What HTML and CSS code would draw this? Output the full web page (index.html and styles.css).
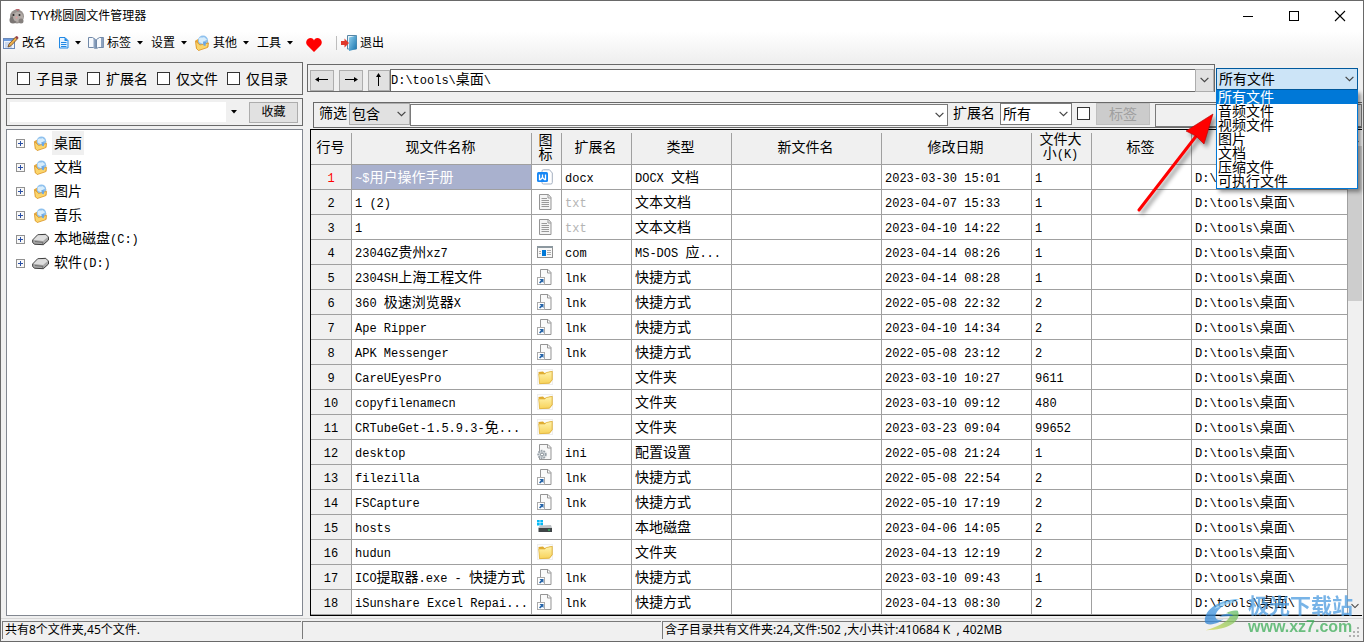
FILE: index.html
```html
<!DOCTYPE html>
<html lang="zh-CN">
<head>
<meta charset="utf-8">
<title>TYY桃圆圆文件管理器</title>
<link rel="stylesheet" href="styles.css">
</head>
<body>
<svg class="defs" aria-hidden="true">
  <defs>
    <linearGradient id="g-folder" x1="0" y1="0" x2="0" y2="1"><stop offset="0" stop-color="#fff3ad"/><stop offset="1" stop-color="#f7d25a"/></linearGradient>
    <linearGradient id="g-door" x1="0" y1="0" x2="1" y2="1"><stop offset="0" stop-color="#8fd0ee"/><stop offset="1" stop-color="#1673ad"/></linearGradient>
    <linearGradient id="g-swoosh" x1="1" y1="0" x2="0" y2="1"><stop offset="0" stop-color="#58b0ee"/><stop offset="1" stop-color="#2c7fd0"/></linearGradient>
    <linearGradient id="g-leaf" x1="1" y1="0" x2="0" y2="1"><stop offset="0" stop-color="#57b96a"/><stop offset="1" stop-color="#d9dc4e"/></linearGradient>
  </defs>
  <symbol id="chev" viewBox="0 0 9 6"><path d="M.6.8 4.5 4.7 8.4.8" fill="none" stroke="#444" stroke-width="1.2"/></symbol>
  <symbol id="caret" viewBox="0 0 6 4"><path d="M0 0h6L3 3.5z" fill="#000"/></symbol>
  <symbol id="plus" viewBox="0 0 9 9"><rect x=".5" y=".5" width="8" height="8" fill="#f8f8f8" stroke="#919191"/><path d="M2 4.5h5M4.5 2v5" stroke="#2a4fa5"/></symbol>
  <symbol id="globe-folder" viewBox="0 0 16 16"><path d="M1.500 5.500 4 4l3 3 7-2 .5 7-10 3.500-2.500-2z" fill="#e8a93a"/><circle cx="9" cy="5.500" r="5" fill="#8fc1ee"/><path d="M5 3.500c2-2 3 0 5-1.500l3 2.500-3 2-1 2.500-4-2z" fill="#d8edfb"/><path d="M1.500 6 6 10l8.500-2-1 4.500L4.500 15.500l-2-2z" fill="#fbd56b" stroke="#d9962d" stroke-width=".8"/><path d="m9 6.500 3 .5-.5 4-2-.5z" fill="#6ba7e4"/></symbol>
  <symbol id="drive" viewBox="0 0 18 14"><path d="M.7 7.500 6 2l8.500-.5 3 3v3L12 12.500l-9.500-.5-1.800-2z" fill="#aaa" stroke="#333"/><path d="M1.500 7.200 6.300 2.600l8-.4 2.400 2.200-5 4.300z" fill="#dedede"/><path d="M3 9.200 11.500 10v2" stroke="#666" fill="none"/></symbol>
  <symbol id="docx" viewBox="0 0 16 16"><path d="M6.500.8h6L15.300 4v9.500a1.500 1.500 0 0 1-1.500 1.500H6.500A1.500 1.500 0 0 1 5 13.500v-11A1.500 1.500 0 0 1 6.500.8z" fill="#fff" stroke="#a4afc0"/><rect y="3" width="11" height="10" rx="1.500" fill="#1787f5"/><path d="M2.500 5.500v5h1l2-2 2 2h1v-5M5.500 5.500v3" fill="none" stroke="#fff" stroke-width="1.300"/></symbol>
  <symbol id="txt" viewBox="0 0 16 16"><path d="M2.500.5h9l2.500 3v12H2.500z" fill="#f4f4f4" stroke="#959595"/><path d="M11 .8V4h3M4.500 4.500H10M4.500 6.500h7.500M4.500 8.500h7.500M4.500 10.500h7.500M4.500 12.500h7.500" fill="none" stroke="#999"/></symbol>
  <symbol id="com" viewBox="0 0 16 16"><rect x=".5" y="2.500" width="15" height="11" fill="#f8f8f8" stroke="#929292"/><path d="M0 2h16v2H0z" fill="#8c989f"/><path d="M5 6h4v6H5z" fill="#0078d7"/><path d="M2 7.500h2M2 9.500h2M10 6.500h4M10 8.500h4M10 10.500h4" stroke="#aaa"/></symbol>
  <symbol id="lnk" viewBox="0 0 16 16"><path d="M3.500.5H11l3 3v12H3.500z" fill="#fafafa" stroke="#959595"/><path d="M10.500.8V4H14" fill="none" stroke="#999"/><rect x=".5" y="8.500" width="7" height="7" fill="#fff" stroke="#aaa"/><path d="M2.500 10h4v4L5.200 12.700 3.200 14.600 2 13.400l1.900-2z" fill="#2564a8"/></symbol>
  <symbol id="dir" viewBox="0 0 16 16"><rect x=".5" y=".5" width="15" height="15" fill="#fcfcfc" stroke="#eee"/><path d="M1.500 3 6 2.500 7.500 4 13 2.500l2.500-.5V11l-3 3.500-10 .5z" fill="#dfaa2d"/><path d="M1.800 5h6L9.500 3.500 15 2.500v8.300L12.500 14l-10 .7z" fill="url(#g-folder)" stroke="#e0b542" stroke-width=".7"/></symbol>
  <symbol id="ini" viewBox="0 0 16 16"><path d="M2.500.5H11l3 3v12H2.500z" fill="#f7f7f7" stroke="#959595"/><path d="M10.500.8V4H14" fill="none" stroke="#999"/><circle cx="5" cy="10.500" r="3.800" fill="#d1d6da" stroke="#98a1a8" stroke-width="1.800" stroke-dasharray="1.700 1"/><circle cx="5" cy="10.500" r="1.500" fill="#fff" stroke="#808990"/></symbol>
  <symbol id="disk" viewBox="0 0 16 16"><path d="M0 1h2.700v2.500H0zM3.300 1H6v2.500H3.300zM0 4h2.700v2.500H0zM3.300 4H6v2.500H3.300z" fill="#05b9f5"/><path d="m3 6.500 11-.5 1 3H1z" fill="#bfc3c6"/><path d="M1.500 9H15v4H1.500z" fill="#3f4447"/><path d="M11 11h2" stroke="#37e46b"/></symbol>
</svg>

<div class="window">
  <header class="titlebar">
    <svg class="ic16" viewBox="0 0 16 16"><circle cx="8" cy="8.500" r="7" fill="#98928f"/><circle cx="4" cy="12" r="3.500" fill="#7b7674"/><circle cx="9" cy="9" r="5" fill="#b3aca8"/><circle cx="12" cy="13" r="2.500" fill="#85807d"/><path d="M6 1h5l-2 2z" fill="#b8646c"/><circle cx="4.500" cy="7" r="1" fill="#292626"/><circle cx="10.500" cy="7" r="1" fill="#292626"/><circle cx="7.500" cy="9.500" r="1" fill="#e49a9d"/></svg>
    <h1 class="title">TYY桃圆圆文件管理器</h1>
    <button class="winbtn" aria-label="最小化"><svg viewBox="0 0 10 10"><path d="M0 5.500h10" stroke="#000"/></svg></button>
    <button class="winbtn" aria-label="最大化"><svg viewBox="0 0 10 10"><rect x=".5" y=".5" width="9" height="9" fill="none" stroke="#000"/></svg></button>
    <button class="winbtn" aria-label="关闭"><svg viewBox="0 0 10 10"><path d="m0 0 10 10M10 0 0 10" stroke="#000" stroke-width="1.100"/></svg></button>
  </header>

  <nav class="toolbar">
    <button class="tool"><svg class="ic16" viewBox="0 0 16 16"><rect x=".5" y="3.500" width="11" height="10" fill="#eef4fc" stroke="#6c89b8"/><path d="M1 4h10v2H1z" fill="#6b9be0"/><path d="M2 8h5M2 10h4M2 12h7" stroke="#a9bedf"/><path d="m5 12 1-3 7-7.500 2 1.800-7 7.500z" fill="#edb04a" stroke="#674225" stroke-width=".8"/><path d="m12 2.500 2-1.500 1.500 1.600L14 4.300z" fill="#99404b"/></svg>改名</button>
    <button class="tool" aria-label="文件"><svg class="ic16" viewBox="0 0 16 16"><path d="M6.500 2.500H12l3 3V13H6.500z" fill="#e8f4ff" stroke="#2289e5"/><path d="M11.500 2v4H15z" fill="#2289e5"/><path d="M8 7.500h5.500M8 9.500h5.500M8 11.500h5.500" stroke="#2289e5"/></svg><svg class="caret"><use href="#caret"/></svg></button>
    <button class="tool"><svg class="ic16" viewBox="0 0 16 16"><path d="M.5 2.500h4l3 2v9l-2-1h-5zM15.500 2.500h-4l-3 2v9l2-1h5z" fill="#f6f9fd" stroke="#7189a8"/><path d="M5.500 3v10l2 1V4zM13 3v9h2.500V3z" fill="#8ca2bf"/></svg>标签<svg class="caret"><use href="#caret"/></svg></button>
    <button class="tool plain">设置<svg class="caret"><use href="#caret"/></svg></button>
    <button class="tool"><svg class="ic16"><use href="#globe-folder"/></svg>其他<svg class="caret"><use href="#caret"/></svg></button>
    <button class="tool plain">工具<svg class="caret"><use href="#caret"/></svg></button>
    <button class="tool heart" aria-label="收藏"><svg viewBox="0 0 16 14"><path d="M8 14 1 7C-1 4 1 0 4.500 0 6.500 0 7.500 1.200 8 2.500 8.500 1.200 9.500 0 11.500 0 15 0 17 4 15 7z" fill="#f00"/></svg></button>
    <span class="sep"></span>
    <button class="tool exit"><svg class="ic16" viewBox="0 0 16 16"><path d="M6.500.5h9V14h-9z" fill="#e8f3fa" stroke="#5686a5"/><path d="M8 2.500 15.500.500V14L8 16z" fill="url(#g-door)"/><path d="M0 6h3.500V3.500L8 8l-4.500 4.500V10H0z" fill="#df382b"/></svg>退出</button>
  </nav>

  <main class="main">
    <aside class="side">
      <div class="box checks">
        <label class="check"><input type="checkbox">子目录</label>
        <label class="check"><input type="checkbox">扩展名</label>
        <label class="check"><input type="checkbox">仅文件</label>
        <label class="check"><input type="checkbox">仅目录</label>
      </div>
      <div class="box fav">
        <input class="fav-input" type="text" aria-label="收藏目录">
        <button class="fav-drop" aria-label="展开"><svg class="caret"><use href="#caret"/></svg></button>
        <button class="btn fav-btn">收藏</button>
      </div>
      <ul class="tree">
        <li><svg class="plus"><use href="#plus"/></svg><svg class="node"><use href="#globe-folder"/></svg><span class="name current">桌面</span></li>
        <li><svg class="plus"><use href="#plus"/></svg><svg class="node"><use href="#globe-folder"/></svg><span class="name">文档</span></li>
        <li><svg class="plus"><use href="#plus"/></svg><svg class="node"><use href="#globe-folder"/></svg><span class="name">图片</span></li>
        <li><svg class="plus"><use href="#plus"/></svg><svg class="node"><use href="#globe-folder"/></svg><span class="name">音乐</span></li>
        <li><svg class="plus"><use href="#plus"/></svg><svg class="node"><use href="#drive"/></svg><span class="name">本地磁盘<span class="lat">(C:)</span></span></li>
        <li><svg class="plus"><use href="#plus"/></svg><svg class="node"><use href="#drive"/></svg><span class="name">软件<span class="lat">(D:)</span></span></li>
      </ul>
    </aside>

    <section class="content">
      <div class="pathrow">
        <div class="pathbox">
          <button class="btn nav" aria-label="后退"><svg viewBox="0 0 14 14"><path d="M1 6.500h12" stroke="#000"/><path d="m0 6.500 4-2.500v5z"/></svg></button>
          <button class="btn nav" aria-label="前进"><svg viewBox="0 0 14 14"><path d="M1 6.500h12" stroke="#000"/><path d="m14 6.500-4-2.500v5z"/></svg></button>
          <button class="btn nav up" aria-label="上一级"><svg viewBox="0 0 14 14"><path d="M6.500 1v12" stroke="#000"/><path d="m6.500 0-2.500 4h5z"/></svg></button>
          <div class="path" role="textbox" contenteditable="true" aria-label="路径">D:\tools\<span class="zh">桌面</span>\</div>
          <button class="btn path-drop" aria-label="展开路径"><svg class="chev"><use href="#chev"/></svg></button>
        </div>
        <div class="combo type">
          <select aria-label="文件类型"><option>所有文件</option><option>音频文件</option><option>视频文件</option><option>图片</option><option>文档</option><option>压缩文件</option><option>可执行文件</option></select>
          <svg class="chev"><use href="#chev"/></svg>
          <ul class="menu" role="listbox">
            <li class="on" role="option">所有文件</li>
            <li role="option">音频文件</li>
            <li role="option">视频文件</li>
            <li role="option">图片</li>
            <li role="option">文档</li>
            <li role="option">压缩文件</li>
            <li role="option">可执行文件</li>
          </ul>
        </div>
      </div>

      <div class="filter">
        <label for="mode">筛选</label>
        <div class="combo mode"><select id="mode"><option>包含</option></select><svg class="chev"><use href="#chev"/></svg></div>
        <div class="combo word"><input type="text" aria-label="筛选内容"><svg class="chev"><use href="#chev"/></svg></div>
        <label class="ext-label" for="ext">扩展名</label>
        <div class="combo ext"><select id="ext"><option>所有</option></select><svg class="chev"><use href="#chev"/></svg></div>
        <input class="tagcheck" type="checkbox" aria-label="按标签筛选">
        <button class="btn tagbtn" disabled>标签</button>
        <input class="tagtext" type="text" aria-label="标签内容">
      </div>

      <div class="gridbox">
        <table class="grid">
          <colgroup><col class="c-no"><col class="c-name"><col class="c-icon"><col class="c-ext"><col class="c-type"><col class="c-new"><col class="c-date"><col class="c-size"><col class="c-tag"><col></colgroup>
          <thead><tr><th>行号</th><th>现文件名称</th><th>图标</th><th>扩展名</th><th>类型</th><th>新文件名</th><th>修改日期</th><th>文件大小<span class="lat">(K)</span></th><th>标签</th><th>路径</th></tr></thead>
          <tbody>
            <tr class="first"><th>1</th><td class="sel">~$<span class="zh">用户操作手册</span></td><td><svg class="ic16"><use href="#docx"/></svg></td><td>docx</td><td>DOCX <span class="zh">文档</span></td><td></td><td>2023-03-30 15:01</td><td>1</td><td></td><td>D:\tools\<span class="zh">桌面</span>\</td></tr>
            <tr><th>2</th><td>1 (2)</td><td><svg class="ic16"><use href="#txt"/></svg></td><td class="dim">txt</td><td><span class="zh">文本文档</span></td><td></td><td>2023-04-07 15:33</td><td>1</td><td></td><td>D:\tools\<span class="zh">桌面</span>\</td></tr>
            <tr><th>3</th><td>1</td><td><svg class="ic16"><use href="#txt"/></svg></td><td class="dim">txt</td><td><span class="zh">文本文档</span></td><td></td><td>2023-04-10 14:22</td><td>1</td><td></td><td>D:\tools\<span class="zh">桌面</span>\</td></tr>
            <tr><th>4</th><td>2304GZ<span class="zh">贵州</span>xz7</td><td><svg class="ic16"><use href="#com"/></svg></td><td>com</td><td>MS-DOS <span class="zh">应</span>...</td><td></td><td>2023-04-14 08:26</td><td>1</td><td></td><td>D:\tools\<span class="zh">桌面</span>\</td></tr>
            <tr><th>5</th><td>2304SH<span class="zh">上海工程文件</span></td><td><svg class="ic16"><use href="#lnk"/></svg></td><td>lnk</td><td><span class="zh">快捷方式</span></td><td></td><td>2023-04-14 08:28</td><td>1</td><td></td><td>D:\tools\<span class="zh">桌面</span>\</td></tr>
            <tr><th>6</th><td>360 <span class="zh">极速浏览器</span>X</td><td><svg class="ic16"><use href="#lnk"/></svg></td><td>lnk</td><td><span class="zh">快捷方式</span></td><td></td><td>2022-05-08 22:32</td><td>2</td><td></td><td>D:\tools\<span class="zh">桌面</span>\</td></tr>
            <tr><th>7</th><td>Ape Ripper</td><td><svg class="ic16"><use href="#lnk"/></svg></td><td>lnk</td><td><span class="zh">快捷方式</span></td><td></td><td>2023-04-10 14:34</td><td>2</td><td></td><td>D:\tools\<span class="zh">桌面</span>\</td></tr>
            <tr><th>8</th><td>APK Messenger</td><td><svg class="ic16"><use href="#lnk"/></svg></td><td>lnk</td><td><span class="zh">快捷方式</span></td><td></td><td>2022-05-08 23:12</td><td>2</td><td></td><td>D:\tools\<span class="zh">桌面</span>\</td></tr>
            <tr><th>9</th><td>CareUEyesPro</td><td><svg class="ic16"><use href="#dir"/></svg></td><td></td><td><span class="zh">文件夹</span></td><td></td><td>2023-03-10 10:27</td><td>9611</td><td></td><td>D:\tools\<span class="zh">桌面</span>\</td></tr>
            <tr><th>10</th><td>copyfilenamecn</td><td><svg class="ic16"><use href="#dir"/></svg></td><td></td><td><span class="zh">文件夹</span></td><td></td><td>2023-03-10 09:12</td><td>480</td><td></td><td>D:\tools\<span class="zh">桌面</span>\</td></tr>
            <tr><th>11</th><td>CRTubeGet-1.5.9.3-<span class="zh">免</span>...</td><td><svg class="ic16"><use href="#dir"/></svg></td><td></td><td><span class="zh">文件夹</span></td><td></td><td>2023-03-23 09:04</td><td>99652</td><td></td><td>D:\tools\<span class="zh">桌面</span>\</td></tr>
            <tr><th>12</th><td>desktop</td><td><svg class="ic16"><use href="#ini"/></svg></td><td>ini</td><td><span class="zh">配置设置</span></td><td></td><td>2022-05-08 21:24</td><td>1</td><td></td><td>D:\tools\<span class="zh">桌面</span>\</td></tr>
            <tr><th>13</th><td>filezilla</td><td><svg class="ic16"><use href="#lnk"/></svg></td><td>lnk</td><td><span class="zh">快捷方式</span></td><td></td><td>2022-05-08 22:54</td><td>2</td><td></td><td>D:\tools\<span class="zh">桌面</span>\</td></tr>
            <tr><th>14</th><td>FSCapture</td><td><svg class="ic16"><use href="#lnk"/></svg></td><td>lnk</td><td><span class="zh">快捷方式</span></td><td></td><td>2022-05-10 17:19</td><td>2</td><td></td><td>D:\tools\<span class="zh">桌面</span>\</td></tr>
            <tr><th>15</th><td>hosts</td><td><svg class="ic16"><use href="#disk"/></svg></td><td></td><td><span class="zh">本地磁盘</span></td><td></td><td>2023-04-06 14:05</td><td>2</td><td></td><td>D:\tools\<span class="zh">桌面</span>\</td></tr>
            <tr><th>16</th><td>hudun</td><td><svg class="ic16"><use href="#dir"/></svg></td><td></td><td><span class="zh">文件夹</span></td><td></td><td>2023-04-13 12:19</td><td>2</td><td></td><td>D:\tools\<span class="zh">桌面</span>\</td></tr>
            <tr><th>17</th><td>ICO<span class="zh">提取器</span>.exe - <span class="zh">快捷方式</span></td><td><svg class="ic16"><use href="#lnk"/></svg></td><td>lnk</td><td><span class="zh">快捷方式</span></td><td></td><td>2023-03-10 09:43</td><td>1</td><td></td><td>D:\tools\<span class="zh">桌面</span>\</td></tr>
            <tr><th>18</th><td>iSunshare Excel Repai...</td><td><svg class="ic16"><use href="#lnk"/></svg></td><td>lnk</td><td><span class="zh">快捷方式</span></td><td></td><td>2023-04-13 08:30</td><td>2</td><td></td><td>D:\tools\<span class="zh">桌面</span>\</td></tr>
          </tbody>
        </table>
        <div class="scroll"><svg class="chev flip"><use href="#chev"/></svg><div class="thumb"></div><svg class="chev"><use href="#chev"/></svg></div>
      </div>
    </section>
  </main>

  <footer class="status">
    <div class="cell">共有8个文件夹,45个文件.</div>
    <div class="cell"></div>
    <div class="cell">含子目录共有文件夹:24,文件:502 ,大小共计:410684 K &nbsp;, 402MB</div>
    <svg class="grip" viewBox="0 0 12 12"><path d="M8 0h2v2H8zM4 4h2v2H4zM8 4h2v2H8zM0 8h2v2H0zM4 8h2v2H4zM8 8h2v2H8z" fill="#b0b0b0"/></svg>
  </footer>

  <svg class="pointer" viewBox="0 0 84 108" aria-hidden="true"><path d="M6 101 64 26" stroke="#f00" stroke-width="3" stroke-linecap="round"/><path d="M80 5 71 35 63 27 53 22z" fill="#f00" stroke="#b40000" stroke-width=".6"/></svg>

  <div class="mark">
    <svg viewBox="0 0 52 40"><path d="M1 28C0 12 20 1 42 1 28 5 17 11 14 19c-2 6 3 8 9 6l-6 4C10 32 2 32 1 28z" fill="url(#g-swoosh)"/><path d="M12 13C20 5 32 3 40 4 30 6 22 9 12 13z" fill="#8dcdf6"/><path d="M40 15c5 12-11 23-38 23 14-4 24-9 28-15 1-3-1-5-4-5 5-3 10-4 14-3z" fill="url(#g-leaf)"/><path d="M18 22c5-4 14-5 17-1-4 0-10 1-17 1z" fill="#3b8fd8"/></svg>
    <div class="mark-text"><span class="mark-name">极光下载站</span><span class="mark-url">www.xz7.com</span></div>
  </div>
</div>
</body>
</html>
```
FILE: styles.css
```css
* { box-sizing: border-box; }
body {
  margin: 0;
  background: #f0f0f0;
  color: #000;
  font: 14px/18px "Liberation Sans", "Noto Sans CJK SC", sans-serif;
}
button, input, select { font: inherit; color: inherit; margin: 0; border-radius: 0; }
button { padding: 0; border: 0; background: none; }
ul { margin: 0; padding: 0; list-style: none; }
svg { display: block; flex: none; overflow: visible; }
.defs { position: absolute; width: 0; height: 0; overflow: hidden; }
.lat { font-family: "Liberation Mono", monospace; font-size: 12px; }
.zh { font-family: "Noto Sans CJK SC", sans-serif; font-size: 14px; }
.ic16 { width: 16px; height: 16px; }
.caret { width: 6px; height: 4px; }
.chev { width: 9px; height: 6px; }

.window {
  position: relative;
  display: flex;
  flex-direction: column;
  min-height: 100vh;
  border: 1px solid #696969;
}

.titlebar { display: flex; align-items: center; height: 30px; padding-left: 8px; background: #fff; }
.title {
  flex: 1;
  margin: 0 0 0 5px;
  font: 12px/18px "Noto Sans", "Noto Sans CJK SC", sans-serif;
}
.winbtn { display: grid; place-items: center; width: 46px; height: 28px; }
.winbtn svg { width: 10px; height: 10px; }

.toolbar {
  display: flex;
  align-items: center;
  gap: 7px;
  height: 29px;
  padding: 0 2px 6px;
  background: linear-gradient(#fff, #f0f0f0);
}
.tool { display: flex; align-items: center; gap: 3px; font-size: 12px; white-space: nowrap; }
.tool .caret { margin-left: 3px; }
.plain { margin-left: 1px; }
.heart { margin: 4px 4px 0 6px; }
.heart svg { width: 16px; height: 14px; }
.sep { width: 1px; height: 14px; margin-left: 3px; background: #bdbdbd; }
.exit { margin-left: -3px; }

.main {
  flex: 1;
  display: grid;
  grid-template-columns: 297px minmax(0, 1fr);
  gap: 4px;
  padding: 2px 1px 2px 5px;
}
.box { border: 1px solid #696969; }
.btn { display: grid; place-items: center; border: 1px solid #adadad; background: #e1e1e1; }
input[type="checkbox"] {
  appearance: none;
  width: 13px;
  height: 13px;
  border: 1px solid #333;
  background: #fff;
}

.side { display: flex; flex-direction: column; gap: 3px; }
.checks { display: flex; align-items: center; gap: 9px; height: 33px; padding-left: 10px; }
.check { display: flex; align-items: center; gap: 6px; }
.fav { display: flex; align-items: center; height: 28px; padding: 3px 4px 3px 3px; }
.fav-input { flex: 1; min-width: 0; height: 100%; border: 0; }
.fav-drop { display: grid; place-items: center; width: 16px; height: 100%; }
.fav-btn { width: 49px; height: 21px; margin-left: 7px; font-size: 12px; }
.tree { flex: 1; padding-top: 1px; border: 1px solid #828790; background: #fff; }
.tree li { display: flex; align-items: center; height: 24px; padding-left: 9px; }
.plus { width: 9px; height: 9px; margin-right: 7px; }
.node { width: 17px; height: 15px; }
.name { margin-left: 3px; padding: 2px; line-height: 20px; }
.current { background: #f0f0f0; }

.content { display: flex; flex-direction: column; min-width: 0; }
.pathrow { display: flex; gap: 1px; padding: 2px 4px 0 0; }
.pathbox { flex: 1; display: flex; align-items: center; height: 28px; padding: 4px 0 0 2px; border: 1px solid #696969; min-width: 0; }
.nav { width: 24px; height: 21px; margin-right: 5px; }
.nav.up { width: 22px; margin-right: 0; }
.nav svg { width: 14px; height: 14px; }
.path {
  flex: 1;
  height: 23px;
  border: 1px solid #696969;
  border-right: 0;
  background: #fff;
  font: 12px/16px "Liberation Mono", "Noto Sans CJK SC", monospace;
}
.path-drop { width: 19px; height: 23px; }

.combo { position: relative; display: grid; align-items: center; }
.combo select, .combo input { grid-area: 1 / 1; width: 100%; height: 22px; appearance: none; border: 1px solid #7a7a7a; background: #fff; padding: 0 2px; outline: 0; }
.combo > .chev { grid-area: 1 / 1; justify-self: end; margin-right: 4px; pointer-events: none; }
.type { width: 142px; margin-top: 4px; height: 22px; }
.type select { border-color: #00599d; background: #cce4f7; }
.menu {
  position: absolute;
  z-index: 2;
  top: 22px;
  left: 0;
  right: 0;
  border: 1px solid #0078d7;
  border-top: 0;
  background: #fff;
  box-shadow: 3px 3px 4px rgba(0, 0, 0, .4);
}
.menu li { height: 14px; padding-left: 1px; line-height: 15px; }
.menu .on { background: #0078d7; color: #fff; }

.filter {
  display: flex;
  align-items: flex-start;
  height: 26px;
  margin: 10px 0 1px 6px;
  padding-left: 5px;
  border: 1px solid #696969;
  border-right: 0;
}
.filter label { line-height: 20px; }
.mode { width: 61px; margin-left: 2px; }
.mode select { border-color: #adadad; background: #e1e1e1; }
.word { flex: 1; margin-top: 1px; }
.ext-label { margin: 0 5px; }
.ext { width: 72px; }
.filter .tagcheck { margin: 4px 6px 0 5px; }
.tagbtn { width: 54px; height: 22px; margin-right: 5px; border-color: #bfbfbf; background: #ccc; color: #a0a0a0; }
.tagtext { width: 207px; height: 23px; margin-top: 1px; border: 1px solid #7a7a7a; background: #f0f0f0; }

.gridbox { display: flex; margin-left: 3px; border: 1px solid #000; border-right: 0; }
.grid {
  flex: 1;
  table-layout: fixed;
  width: 100%;
  border-spacing: 0;
  background: #fff;
  font: 12px/20px "Liberation Mono", "Noto Sans CJK SC", monospace;
}
.c-no { width: 41px; }
.c-name { width: 180px; }
.c-icon { width: 30px; }
.c-ext { width: 70px; }
.c-type { width: 100px; }
.c-new, .c-date { width: 150px; }
.c-size { width: 60px; }
.c-tag { width: 100px; }
.grid th {
  padding: 0;
  border: solid #a0a0a0;
  border-width: 0 1px 1px 0;
  background: #f0f0f0;
  font-weight: 400;
  text-align: center;
}
.grid thead th {
  height: 35px;
  padding: 0 8px 0 5px;
  border-right: 0;
  background: linear-gradient(#a0a0a0, #a0a0a0) right bottom / 1px 31px no-repeat #f0f0f0;
  font: 14px/14px "Liberation Sans", "Noto Sans CJK SC", sans-serif;
}
.grid thead th:first-child { padding: 0 2px 0 0; }
.grid td {
  height: 25px;
  padding: 0 0 0 3px;
  overflow: hidden;
  border: solid #a0a0a0;
  border-width: 0 1px 1px 0;
  white-space: nowrap;
}
/* Keeps one baseline for cells with and without Chinese text */
.grid td:not(:nth-child(3))::before,
.grid tbody th::before { content: "\200b"; font: 14px/20px "Noto Sans CJK SC", sans-serif; }
.grid td .ic16 { margin-left: 2px; }
.grid .sel { background: #a9b1ce; color: #fff; }
.grid .dim { color: #b4b4b4; }
.grid .first th { color: #f00; }
.scroll { display: flex; flex-direction: column; align-items: center; width: 14px; padding: 7px 0 6px; background: #f0f0f0; }
.scroll .chev { width: 8px; }
.flip { transform: rotate(180deg); }
.thumb { width: 100%; height: 155px; margin: 3px 0 auto; background: #cdcdcd; }

.status {
  display: grid;
  grid-template-columns: 299px 359px minmax(0, 1fr) 12px;
  gap: 1px;
  height: 23px;
  padding: 2px 2px 2px 1px;
  border-top: 1px solid #d7d7d7;
  font: 12px/16px "Noto Sans", "Noto Sans CJK SC", sans-serif;
}
.cell { height: 18px; padding-left: 2px; border-top: 1px solid #7a7a7a; border-left: 1px solid #7a7a7a; white-space: nowrap; }
.grip { align-self: end; width: 12px; height: 12px; }

.pointer {
  position: absolute;
  z-index: 1;
  top: 108px;
  right: 146px;
  width: 84px;
  height: 108px;
  filter: drop-shadow(3px 3px 2px rgba(0, 0, 0, .45));
}
.mark { position: absolute; right: 8px; bottom: 5px; display: flex; align-items: center; opacity: .75; }
.mark svg { width: 44px; height: 38px; }
.mark-text { display: flex; flex-direction: column; width: 107px; font-weight: 700; white-space: nowrap; }
.mark-name { color: #4b9be0; font-size: 21px; line-height: 24px; }
.mark-url { color: #3fae5a; font-size: 16px; line-height: 18px; }
```
